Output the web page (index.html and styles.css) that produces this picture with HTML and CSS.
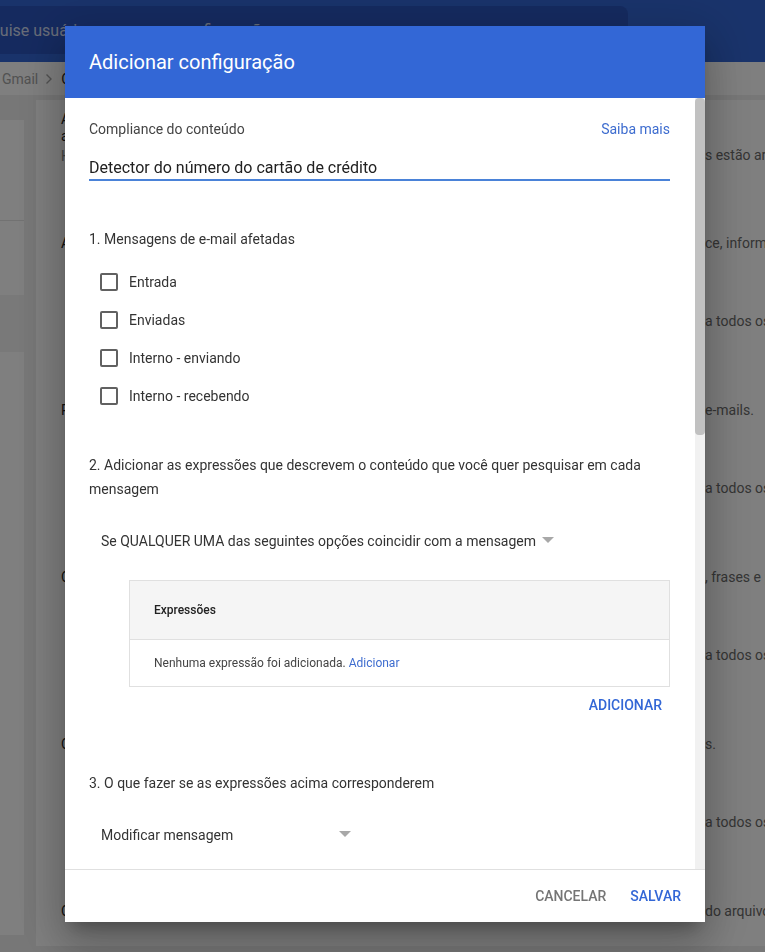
FILE: index.html
```html
<!DOCTYPE html>
<html lang="pt-BR">
<head>
<meta charset="utf-8">
<title>Adicionar configuração</title>
<link rel="stylesheet" href="styles.css">
</head>
<body>
<div class="page">
  <header class="topbar">
    <div class="search">Pesquise usuários, grupos ou configurações</div>
  </header>
  <nav class="crumbs">
    <span class="crumb-link">Gmail</span>
    <svg class="sep" width="8" height="12" viewBox="0 0 8 12"><path d="M1.5 1.5L6 6l-4.5 4.5" fill="none" stroke="currentColor" stroke-width="1.4"/></svg>
    <span class="crumb-cur">Compliance</span>
  </nav>
  <main class="content">
    <aside class="sidenav">
      <div class="nav-head">Gmail</div>
      <div class="nav-item">Configurações</div>
      <div class="nav-item selected">Compliance</div>
      <div class="nav-item">Avançado</div>
    </aside>
    <section class="card">
      <div class="row first">
        <div class="row-title">
          <div>Armazenamento de e-mail</div>
          <div>avançado</div>
          <div class="muted">Herdado</div>
        </div>
        <div class="row-desc"><div class="top-gap">s estão armazenados</div></div>
      </div>
      <div class="row">
        <div class="row-title">Anexar rodapé de compliance</div>
        <div class="row-desc"><div>ce, informações</div><div class="sub">a todos os usuários</div></div>
      </div>
      <div class="row">
        <div class="row-title">Restringir entrega</div>
        <div class="row-desc"><div>e-mails.</div><div class="sub">a todos os usuários</div></div>
      </div>
      <div class="row">
        <div class="row-title">Compliance do conteúdo</div>
        <div class="row-desc"><div>, frases e padrões</div><div class="sub">a todos os usuários</div></div>
      </div>
      <div class="row">
        <div class="row-title">Compliance de conteúdo questionável</div>
        <div class="row-desc"><div>s.</div><div class="sub">a todos os usuários</div></div>
      </div>
      <div class="row">
        <div class="row-title">Compliance de anexos</div>
        <div class="row-desc"><div>do arquivo</div></div>
      </div>
    </section>
  </main>
</div>

<div class="scrim"></div>

<div class="dialog" role="dialog" aria-label="Adicionar configuração">
  <div class="dlg-header">Adicionar configuração</div>
  <div class="dlg-body">
    <div class="dlg-scroll">
      <div class="dlg-content">
        <div class="field-head">
          <span>Compliance do conteúdo</span>
          <a class="link" href="#">Saiba mais</a>
        </div>
        <input class="text-input" type="text" value="Detector do número do cartão de crédito">

        <div class="step step-1">1. Mensagens de e-mail afetadas</div>
        <div class="checks">
          <label class="check"><input type="checkbox"><span>Entrada</span></label>
          <label class="check"><input type="checkbox"><span>Enviadas</span></label>
          <label class="check"><input type="checkbox"><span>Interno - enviando</span></label>
          <label class="check"><input type="checkbox"><span>Interno - recebendo</span></label>
        </div>

        <div class="step step-2">2. Adicionar as expressões que descrevem o conteúdo que você quer pesquisar em cada mensagem</div>
        <div class="select select-1">
          <span class="select-text">Se QUALQUER UMA das seguintes opções coincidir com a mensagem</span>
          <span class="caret"></span>
        </div>

        <div class="table">
          <div class="table-head">Expressões</div>
          <div class="table-body">Nenhuma expressão foi adicionada.&nbsp;<a class="link" href="#">Adicionar</a></div>
        </div>
        <div class="actions"><button class="btn btn-primary" type="button">ADICIONAR</button></div>

        <div class="step step-3">3. O que fazer se as expressões acima corresponderem</div>
        <div class="select select-2">
          <span class="select-text">Modificar mensagem</span>
          <span class="caret"></span>
        </div>

        <div class="extra">
          <div class="extra-title">Cabeçalhos</div>
          <label class="check"><input type="checkbox"><span>Adicionar cabeçalho X-Gm-Original-To</span></label>
          <label class="check"><input type="checkbox"><span>Adicionar cabeçalho X-Gm-Spam e X-Gm-Phishy</span></label>
          <label class="check"><input type="checkbox"><span>Adicionar cabeçalhos personalizados</span></label>
          <div class="extra-title">Assunto</div>
          <label class="check"><input type="checkbox"><span>Adicionar texto personalizado ao assunto</span></label>
        </div>
      </div>
    </div>
    <div class="scrollbar" aria-hidden="true"><div class="thumb"></div></div>
  </div>
  <div class="dlg-footer">
    <button class="btn btn-cancel" type="button">CANCELAR</button>
    <button class="btn btn-primary" type="button">SALVAR</button>
  </div>
</div>
</body>
</html>
```
FILE: styles.css
```css
* { box-sizing: border-box; }

html, body {
  margin: 0;
  padding: 0;
}

body {
  width: 765px;
  height: 952px;
  overflow: hidden;
  background: #eeeeee;
  font-family: Roboto, "Noto Sans", "Liberation Sans", Arial, sans-serif;
  color: #212121;
}

/* ---------- background page ---------- */
.page {
  height: 952px;
  display: flex;
  flex-direction: column;
}

.topbar {
  flex: none;
  height: 62px;
  padding-top: 6px;
  background: #3367d6;
}

.search {
  width: 688px;
  height: 48px;
  margin-left: -60px;
  padding-left: 24px;
  border-radius: 8px;
  background: #2b55bf;
  color: rgba(255, 255, 255, 0.78);
  font-size: 16px;
  line-height: 50px;
  white-space: nowrap;
}

.crumbs {
  flex: none;
  height: 33px;
  padding-left: 2px;
  display: flex;
  align-items: center;
  background: #ffffff;
  font-size: 14px;
  color: #a4a4a4;
}

.crumbs .sep {
  margin: 0 8px 0 7px;
}

.crumb-cur {
  color: #212121;
}

.content {
  flex: 1;
  display: flex;
  align-items: flex-start;
  gap: 12px;
}

.sidenav {
  flex: none;
  width: 24px;
  height: 815px;
  margin-top: 25px;
  background: #ffffff;
  overflow: hidden;
  white-space: nowrap;
  font-size: 14px;
  color: #444444;
}

.nav-head {
  height: 101px;
  padding-left: 40px;
  border-bottom: 1px solid #e4e4e4;
}

.nav-item {
  height: 74px;
  padding-left: 40px;
}

.nav-item.selected {
  height: 57px;
  background: #f2f2f2;
}

.card {
  flex: 1;
  height: 846px;
  margin-top: 5px;
  padding: 11px 0 0 25px;
  background: #ffffff;
  font-size: 14px;
  line-height: 17px;
  overflow: hidden;
  white-space: nowrap;
}

.row {
  display: grid;
  grid-template-columns: 644px 1fr;
  height: 167px;
}

.row.first {
  height: 124px;
}

.row-title {
  color: #222222;
}

.row-title .muted {
  margin-top: 3px;
  color: #8a8a8a;
}

.row-desc {
  color: #6a6a6a;
}

.row-desc .top-gap {
  margin-top: 36px;
}

.row-desc .sub {
  margin-top: 61px;
}

/* ---------- scrim + dialog ---------- */
.scrim {
  position: fixed;
  inset: 0;
  background: rgba(0, 0, 0, 0.5);
}

.dialog {
  position: fixed;
  left: 65px;
  top: 26px;
  width: 640px;
  height: 896px;
  display: flex;
  flex-direction: column;
  background: #ffffff;
  box-shadow: 0 11px 15px -7px rgba(0, 0, 0, 0.25),
              0 24px 38px 3px rgba(0, 0, 0, 0.16),
              0 9px 46px 8px rgba(0, 0, 0, 0.14);
}

.dlg-header {
  flex: none;
  height: 72px;
  padding: 0 24px;
  display: flex;
  align-items: center;
  background: #3367d6;
  color: #ffffff;
  font-size: 20px;
  font-weight: 400;
}

.dlg-body {
  flex: 1;
  min-height: 0;
  display: flex;
}

.dlg-scroll {
  flex: 1;
  min-width: 0;
  overflow: hidden;
}

.scrollbar {
  flex: none;
  width: 10px;
  background: #f1f1f1;
}

.thumb {
  height: 337px;
  border-radius: 4px;
  background: #c1c1c1;
}

.dlg-content {
  padding: 21px 25px 40px 24px;
  font-size: 14px;
  color: #333333;
}

.field-head {
  display: flex;
  justify-content: space-between;
  line-height: 20px;
  color: #444444;
}

.link {
  color: #3d6ccf;
  text-decoration: none;
}

.text-input {
  display: block;
  width: 100%;
  height: 26px;
  margin-top: 16px;
  padding: 0;
  border: 0;
  border-bottom: 2px solid #4a82d8;
  outline: none;
  background: transparent;
  font-family: inherit;
  font-size: 16px;
  line-height: 24px;
  color: #212121;
}

.step {
  line-height: 20px;
  color: #333333;
}

.step-1 {
  margin-top: 48px;
}

.step-2 {
  margin-top: 38px;
  line-height: 24px;
}

.step-3 {
  margin-top: 50px;
}

.checks {
  margin-top: 14px;
  display: flex;
  flex-direction: column;
}

.check {
  height: 38px;
  padding-left: 11px;
  display: flex;
  align-items: center;
  gap: 11px;
  color: #333333;
}

.check input {
  appearance: none;
  -webkit-appearance: none;
  flex: none;
  width: 18px;
  height: 18px;
  margin: 0;
  border: 2px solid #616161;
  border-radius: 2px;
  background: #ffffff;
}

.select {
  display: flex;
  align-items: center;
  width: fit-content;
  min-width: 270px;
  height: 36px;
  padding: 0 8px 0 12px;
  color: #333333;
}

.select-1 {
  margin-top: 22px;
}

.select-2 {
  margin-top: 24px;
}

.select-text {
  flex: 1;
}

.caret {
  flex: none;
  width: 0;
  height: 0;
  margin: 0 0 3px 6px;
  border-left: 6px solid transparent;
  border-right: 6px solid transparent;
  border-top: 6px solid #a8a8a8;
}

.table {
  margin-top: 21px;
  margin-left: 40px;
  border: 1px solid #e0e0e0;
  font-size: 12px;
}

.table-head {
  height: 59px;
  padding-left: 24px;
  display: flex;
  align-items: center;
  background: #f5f5f5;
  border-bottom: 1px solid #e0e0e0;
  font-weight: 500;
  color: #212121;
}

.table-body {
  height: 46px;
  padding-left: 24px;
  display: flex;
  align-items: center;
  color: #444444;
}

.actions {
  display: flex;
  justify-content: flex-end;
}

.btn {
  height: 36px;
  padding: 0 8px;
  border: 0;
  background: transparent;
  font-family: inherit;
  font-size: 14px;
  font-weight: 500;
  cursor: pointer;
}

.btn-primary {
  color: #3367d6;
}

.btn-cancel {
  color: #757575;
}

.extra {
  margin-top: 40px;
}

.extra-title {
  margin: 24px 0 8px;
  line-height: 20px;
  color: #333333;
}

.dlg-footer {
  flex: none;
  height: 53px;
  padding-right: 16px;
  display: flex;
  justify-content: flex-end;
  align-items: center;
  gap: 8px;
  border-top: 1px solid #e0e0e0;
}
```
